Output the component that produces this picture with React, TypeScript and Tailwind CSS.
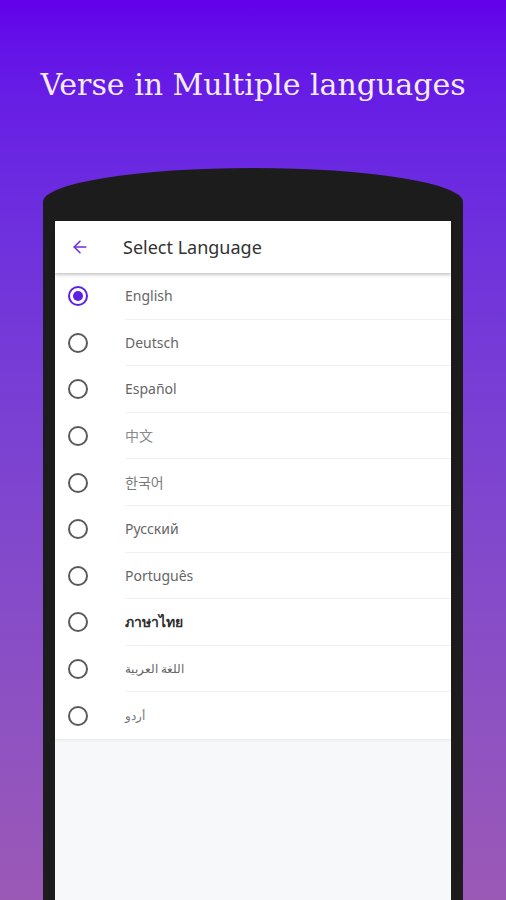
import { ArrowLeft } from "lucide-react";

type Lang = { label: string; className: string };

const languages: Lang[] = [
  { label: "English", className: "text-[14px] text-[#666]" },
  { label: "Deutsch", className: "text-[14px] text-[#666]" },
  { label: "Español", className: "text-[14px] text-[#666]" },
  { label: "中文", className: "text-[14px] text-[#8a8a8a]" },
  { label: "한국어", className: "text-[14px] text-[#7a7a7a]" },
  { label: "Русский", className: "text-[14px] text-[#666]" },
  { label: "Português", className: "text-[14px] text-[#666]" },
  { label: "ภาษาไทย", className: "text-[14px] font-bold text-[#2e2e2e]" },
  { label: "اللغة العربية", className: "text-[12px] text-[#666]" },
  { label: "أردو", className: "text-[12px] text-[#777]" },
];

const Radio = ({ checked }: { checked: boolean }) =>
  checked ? (
    <div className="flex h-[20px] w-[20px] items-center justify-center rounded-full border-2 border-[#5b1fe6]">
      <div className="h-[10px] w-[10px] rounded-full bg-[#5b1fe6]" />
    </div>
  ) : (
    <div className="h-[20px] w-[20px] rounded-full border-2 border-[#5a5a5a]" />
  );

const App = () => {
  const selected = "English";

  return (
    <div className="flex h-[900px] w-[506px] flex-col items-center overflow-hidden bg-gradient-to-b from-[#6200ea] to-[#9b59b6]">
      <div className="flex h-[168px] w-full items-start justify-center pt-[65px]">
        <h1 className="font-['DejaVu_Serif',serif] text-[30px] leading-[40px] text-[#f3ecff]">
          Verse in Multiple languages
        </h1>
      </div>
      <div className="flex w-[420px] flex-1 flex-col rounded-t-[210px_34px] bg-[#1c1c1c] px-[12px] pt-[53px]">
        <div className="flex flex-1 flex-col bg-[#f7f8fa]">
          <div className="relative z-10 flex h-[52px] items-center bg-white shadow-[0_2px_3px_rgba(0,0,0,0.22)]">
            <div className="flex w-[50px] justify-center">
              <ArrowLeft className="h-[20px] w-[20px] text-[#6a2ddb]" strokeWidth={1.8} />
            </div>
            <span className="ml-[18px] font-['Noto_Sans',sans-serif] text-[18px] text-[#333]">
              Select Language
            </span>
          </div>
          <div className="flex flex-col bg-white shadow-[0_1px_3px_rgba(0,0,0,0.08)]">
            {languages.map((lang, index) => (
              <div key={lang.label} className="flex h-[46.6px] items-center">
                <div className="flex w-[46px] justify-center">
                  <Radio checked={lang.label === selected} />
                </div>
                <div
                  className={`ml-[24px] flex h-full flex-1 items-center ${
                    index < languages.length - 1 ? "border-b border-[#f0f0f0]" : ""
                  }`}
                >
                  <span
                    className={`font-['Noto_Sans','Noto_Sans_CJK_SC',sans-serif] ${lang.className}`}
                  >
                    {lang.label}
                  </span>
                </div>
              </div>
            ))}
          </div>
        </div>
      </div>
    </div>
  );
};

export default App;
